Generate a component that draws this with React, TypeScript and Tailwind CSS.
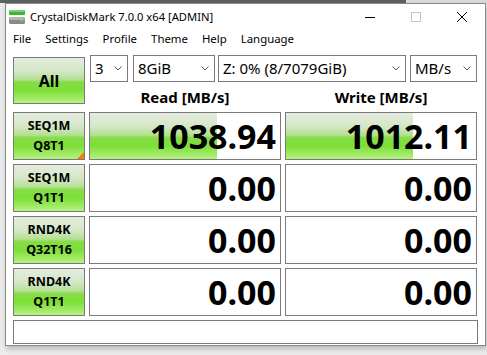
import React from "react";

type Row = {
	top: string;
	bottom: string;
	read: string;
	write: string;
	readPct: number;
	writePct: number;
	marked?: boolean;
};

const rows: Row[] = [
	{ top: "SEQ1M", bottom: "Q8T1", read: "1038.94", write: "1012.11", readPct: 67, writePct: 67, marked: true },
	{ top: "SEQ1M", bottom: "Q1T1", read: "0.00", write: "0.00", readPct: 0, writePct: 0 },
	{ top: "RND4K", bottom: "Q32T16", read: "0.00", write: "0.00", readPct: 0, writePct: 0 },
	{ top: "RND4K", bottom: "Q1T1", read: "0.00", write: "0.00", readPct: 0, writePct: 0 },
];

const menus = ["File", "Settings", "Profile", "Theme", "Help", "Language"];

// green glossy gradient used by buttons and meter bars
const greenBg =
	"bg-[linear-gradient(to_bottom,#e5ecdf_0%,#d3e7c5_30%,#b4df92_48%,#84dd44_54%,#7edf38_72%,#a6ec6c_92%,#b8f283_100%)]";

const Chevron = () => (
	<svg width="8" height="5" viewBox="0 0 8 5" className="shrink-0">
		<path d="M0.5 0.5 L4 4 L7.5 0.5" fill="none" stroke="#5a5a5a" strokeWidth="1" />
	</svg>
);

const Combo = ({ value, className }: { value: string; className: string }) => (
	<div
		className={`flex h-[27px] items-center justify-between border border-[#7a7a7a] bg-white pr-[5px] pl-[4px] text-[15px] text-black ${className}`}
	>
		<span className="whitespace-nowrap">{value}</span>
		<Chevron />
	</div>
);

const Meter = ({ value, pct }: { value: string; pct: number }) => (
	<div className="relative flex h-[48px] w-[192px] items-center justify-end overflow-hidden border border-[#7a7a7a] bg-white pr-[4px]">
		{pct > 0 ? (
			<div className={`absolute top-0 bottom-0 left-0 ${greenBg}`} style={{ width: `${pct}%` }} />
		) : null}
		<span className="relative text-[34px] leading-none font-bold text-black">{value}</span>
	</div>
);

const AppIcon = () => (
	<svg width="16" height="16" viewBox="0 0 16 16">
		<rect x="0" y="1" width="16" height="5" rx="1" fill="#3fb43a" />
		<rect x="0" y="1" width="16" height="2" rx="1" fill="#6fd86a" />
		<rect x="0" y="8" width="16" height="7" rx="1.5" fill="#8a8a8a" />
		<rect x="0" y="8" width="16" height="3" rx="1.5" fill="#b5b5b5" />
		<rect x="11" y="11" width="3" height="2" fill="#4cd44a" />
	</svg>
);

export default function App() {
	return (
		<div className="flex h-[355px] w-[487px] flex-col overflow-hidden bg-[#ececec] font-['Noto_Sans',sans-serif]">
			<div className="flex h-[3px] shrink-0">
				<div className="w-[406px] bg-[#5f6062]" />
				<div className="flex-1 bg-[#d9d9d9]" />
			</div>
			<div className="pl-[5px]">
				<div className="flex h-[343px] w-[481px] flex-col border border-[#8a8a8a] bg-white shadow-[1px_3px_5px_rgba(0,0,0,0.22)]">
					{/* title bar */}
					<div className="flex h-[26px] shrink-0 items-center">
						<div className="pl-[3px]">
							<AppIcon />
						</div>
						<span className="pl-[5px] text-[11.2px] text-black">CrystalDiskMark 7.0.0 x64 [ADMIN]</span>
						<div className="ml-auto flex h-full">
							<div className="flex w-[46px] items-center justify-center">
								<div className="h-px w-[10px] bg-black" />
							</div>
							<div className="flex w-[46px] items-center justify-center">
								<div className="h-[10px] w-[10px] border border-[#c4c4c4]" />
							</div>
							<div className="flex w-[46px] items-center justify-center">
								<svg width="10" height="10" viewBox="0 0 10 10">
									<path d="M0 0 L10 10 M10 0 L0 10" stroke="#000" strokeWidth="1" />
								</svg>
							</div>
						</div>
					</div>

					{/* menu bar */}
					<div className="flex h-[18px] shrink-0 items-center text-[11.4px] text-black">
						{menus.map((m) => (
							<span key={m} className="px-[7px]">
								{m}
							</span>
						))}
					</div>

					{/* client */}
					<div className="flex flex-1 flex-col gap-[4px] px-[7px] pt-[7px]">
						<div className="flex h-[53px] items-start gap-[4px]">
							<div
								className={`mt-[2px] flex h-[47px] w-[72px] items-center justify-center border border-[#7a7a7a] text-[16px] font-bold text-black ${greenBg}`}
							>
								All
							</div>
							<div className="flex w-[388px] flex-col">
								<div className="flex h-[27px] items-center">
									<Combo value="3" className="ml-[1px] w-[38px]" />
									<Combo value="8GiB" className="ml-[5px] w-[82px]" />
									<Combo value="Z: 0% (8/7079GiB)" className="ml-[3px] w-[188px]" />
									<Combo value="MB/s" className="ml-[4px] w-[67px]" />
								</div>
								<div className="flex h-[26px] gap-[4px] pt-[4px] text-[15px] font-bold text-black">
									<div className="flex w-[192px] items-center justify-center">Read [MB/s]</div>
									<div className="flex w-[192px] items-center justify-center">Write [MB/s]</div>
								</div>
							</div>
						</div>

						{rows.map((r, i) => (
							<div key={i} className="flex gap-[4px]">
								<div
									className={`relative flex h-[48px] w-[72px] flex-col items-center justify-center border border-[#7a7a7a] text-[12.5px] leading-[20px] font-bold text-black ${greenBg}`}
								>
									<span>{r.top}</span>
									<span>{r.bottom}</span>
									{r.marked ? (
										<div className="absolute right-0 bottom-0 h-0 w-0 border-b-[7px] border-l-[7px] border-b-[#f67a0e] border-l-transparent" />
									) : null}
								</div>
								<Meter value={r.read} pct={r.readPct} />
								<Meter value={r.write} pct={r.writePct} />
							</div>
						))}

						<div className="h-[24px] border border-[#7a7a7a] bg-white" />
					</div>
				</div>
			</div>
		</div>
	);
}
